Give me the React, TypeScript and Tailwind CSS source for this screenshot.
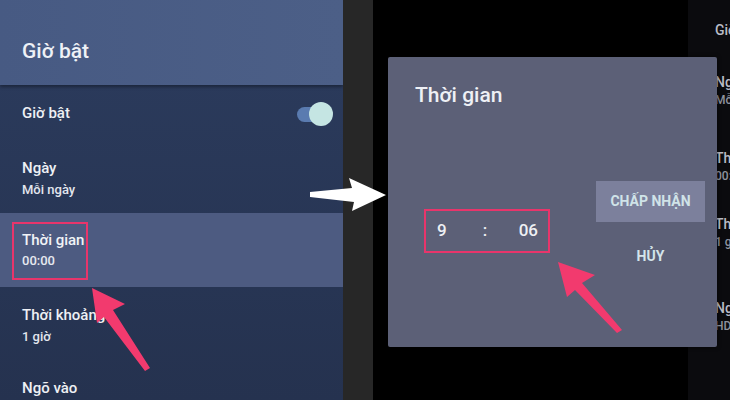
import React from 'react';

const font = { fontFamily: 'Roboto, "Noto Sans", "Liberation Sans", sans-serif' };

function Row({ title, sub, toggle }: { title: string; sub?: string; toggle?: boolean }) {
  return (
    <div className={`flex shrink-0 items-start justify-between pl-[22px] pr-[10px] pt-[18px] ${sub ? 'h-[73px]' : 'h-[55px]'}`}>
      <div>
        <div className="text-[15px] leading-5 font-medium text-[#eef0f4]">{title}</div>
        {sub && <div className="mt-[3px] text-[13px] leading-[18px] font-medium text-[#e3e6ee]">{sub}</div>}
      </div>
      {toggle && (
        <div className="relative mt-[-1px] h-[24px] w-[36px]">
          <div className="absolute left-0 top-[5px] h-[15px] w-[30px] rounded-full bg-[#5a7bb0]" />
          <div className="absolute right-0 top-0 h-[24px] w-[24px] rounded-full bg-[#c5e5e3]" />
        </div>
      )}
    </div>
  );
}

export default function App() {
  return (
    <div className="relative flex h-[400px] w-[730px] overflow-hidden bg-black" style={font}>
      {/* left photo: settings list */}
      <div className="flex h-full w-[373px]">
        <div className="flex w-[343px] flex-col overflow-hidden bg-gradient-to-b from-[#2c3c5e] to-[#25324f]">
          <div className="flex h-[85px] shrink-0 items-center bg-gradient-to-r from-[#475a83] to-[#4c5f87] pl-[22px] pt-[18px] shadow-[0_2px_3px_rgba(0,0,0,0.35)]">
            <span className="text-[21px] font-medium text-[#eef1f6]">Giờ bật</span>
          </div>
          <Row title="Giờ bật" toggle />
          <Row title="Ngày" sub="Mỗi ngày" />
          <div className="h-[74px] shrink-0 bg-[#4d5b81] pl-[12px] pt-[9px]">
            <div className="w-[76px] h-[58px] border-2 border-[#e8356b] pl-[8px] pt-[6px]">
              <div className="text-[15px] leading-5 font-medium text-[#f1f3f7]">Thời gian</div>
              <div className="mt-[2px] text-[13px] leading-[18px] font-medium text-[#e6e9f0]">00:00</div>
            </div>
          </div>
          <Row title="Thời khoảng" sub="1 giờ" />
          <Row title="Ngõ vào" />
        </div>
        <div className="w-[30px] bg-[#272727]" />
      </div>

      {/* right photo: time dialog */}
      <div className="relative flex h-full w-[357px]">
        <div className="w-[315px] bg-black" />
        <div className="flex w-[42px] flex-col overflow-hidden whitespace-nowrap bg-[#0b0b0e] pl-[27px] text-[14px] font-medium text-[#b9bcc6]">
          <div className="mt-[20px] leading-5">Giờ bật</div>
          <div className="mt-[32px] leading-5">Ngày</div>
          <div className="text-[12px] leading-4 text-[#8f939e]">Mỗi ngày</div>
          <div className="mt-[40px] leading-5">Thời gian</div>
          <div className="text-[12px] leading-4 text-[#8f939e]">00:00</div>
          <div className="mt-[30px] leading-5">Thời khoảng</div>
          <div className="text-[12px] leading-4 text-[#8f939e]">1 giờ</div>
          <div className="mt-[48px] leading-5">Ngõ vào</div>
          <div className="text-[12px] leading-4 text-[#8f939e]">HDMI</div>
        </div>

        <div className="absolute left-[15px] top-[57px] flex h-[290px] w-[329px] flex-col rounded-[2px] bg-[#5c6077] shadow-[0_0_4px_rgba(0,0,0,0.6)]">
          <div className="pl-[27px] pt-[24px] text-[21px] font-medium leading-7 text-[#eef0f5]">Thời gian</div>
          <div className="mt-[72px] flex">
            <div className="ml-[36px] mt-[28px] flex h-[44px] w-[126px] items-center border-2 border-[#e8356b] pl-[11px] pr-[10px] text-[17px] font-medium text-[#eef0f4]">
              <span>9</span>
              <span className="ml-[36px]">:</span>
              <span className="ml-auto">06</span>
            </div>
            <div className="ml-[46px] flex flex-col items-center">
              <div className="flex h-[41px] w-[109px] items-center justify-center bg-[#7c809c] text-[14px] font-bold text-[#d0e3e8]">
                CHẤP NHẬN
              </div>
              <div className="mt-[24px] text-[14px] font-bold text-[#d4e4ea]">HỦY</div>
            </div>
          </div>
        </div>
      </div>

      {/* annotation arrows */}
      <svg className="pointer-events-none absolute left-0 top-0" width="730" height="400" viewBox="0 0 730 400">
        <polygon points="310,192 352,188 349,178 386,195 352,211 354,202 310,197" fill="#ffffff" />
        <polygon points="92,288 125,304 113,310 150,368 145,371 104,317 97,323" fill="#f23a6e" />
        <polygon points="558,262 595,275 582,283 622,330 617,333 575,290 567,297" fill="#f23a6e" />
      </svg>
    </div>
  );
}
